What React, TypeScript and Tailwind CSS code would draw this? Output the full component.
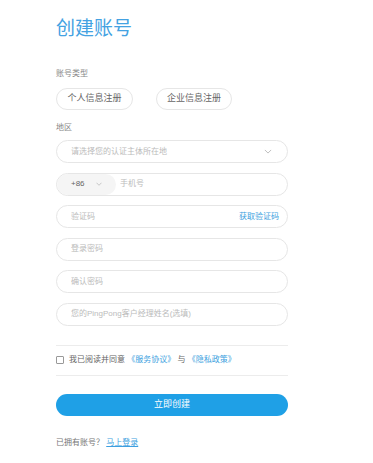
import { useState } from "react";

const font = { fontFamily: '"Liberation Sans", "Noto Sans CJK SC", sans-serif' };

function Chevron({ className }: { className?: string }) {
  return (
    <svg viewBox="0 0 12 8" className={className} fill="none" stroke="currentColor" strokeWidth="1.2">
      <path d="M1 1.5l5 5 5-5" />
    </svg>
  );
}

function Field({ placeholder, right }: { placeholder: string; right?: React.ReactNode }) {
  return (
    <div className="flex h-[23px] items-center rounded-full border border-[#e6e6e6] bg-white pl-[14px] pr-[8px]">
      <input
        className="min-w-0 flex-1 bg-transparent text-[8px] text-[#333] outline-none placeholder:text-[#bbb]"
        placeholder={placeholder}
      />
      {right}
    </div>
  );
}

export default function App() {
  const [type, setType] = useState("personal");
  const [agree, setAgree] = useState(false);

  return (
    <div className="min-h-[463px] w-[373px] bg-white" style={font}>
      <div className="ml-[56px] w-[232px] pt-[18px]">
        <h1 className="text-[19px] leading-[22px] text-[#44a2e2]">创建账号</h1>

        <p className="mt-[29px] text-[8px] leading-[10px] text-[#888]">账号类型</p>
        <div className="mt-[9px] flex gap-[23px]">
          <button
            type="button"
            onClick={() => setType("personal")}
            className="h-[22px] w-[77px] rounded-full border border-[#e6e6e6] text-[9px] text-[#666]"
          >
            个人信息注册
          </button>
          <button
            type="button"
            onClick={() => setType("company")}
            className="h-[22px] w-[76px] rounded-full border border-[#e6e6e6] text-[9px] text-[#666]"
          >
            企业信息注册
          </button>
        </div>

        <p className="mt-[13px] text-[8px] leading-[10px] text-[#888]">地区</p>
        <div className="mt-[7px] flex flex-col gap-[9.5px]">
          <div className="flex h-[23px] items-center justify-between rounded-full border border-[#e6e6e6] pl-[14px] pr-[15px]">
            <span className="text-[8px] text-[#bbb]">请选择您的认证主体所在地</span>
            <Chevron className="h-[5px] w-[8px] text-[#aaa]" />
          </div>

          <div className="flex h-[23px] items-center overflow-hidden rounded-full border border-[#e6e6e6]">
            <div className="flex h-full w-[59px] items-center gap-[11px] rounded-full bg-[#f5f5f5] pl-[14px]">
              <span className="text-[8px] text-[#666]">+86</span>
              <Chevron className="h-[4px] w-[6px] text-[#aaa]" />
            </div>
            <input
              className="ml-[4px] min-w-0 flex-1 bg-transparent text-[8px] outline-none placeholder:text-[#bbb]"
              placeholder="手机号"
            />
          </div>

          <Field
            placeholder="验证码"
            right={<span className="text-[8px] text-[#3d9fe0]">获取验证码</span>}
          />
          <Field placeholder="登录密码" />
          <Field placeholder="确认密码" />
          <Field placeholder="您的PingPong客户经理姓名(选填)" />
        </div>

        <div className="mt-[19px] border-t border-[#ececec]" />
        <label className="flex h-[29px] items-center gap-[5px] text-[8px] text-[#666]">
          <input
            type="checkbox"
            checked={agree}
            onChange={(e) => setAgree(e.target.checked)}
            className="h-[8px] w-[8px] appearance-none rounded-[1px] border border-[#999] bg-white"
          />
          <span>
            我已阅读并同意 <span className="text-[#3d9fe0]">《服务协议》</span> 与{" "}
            <span className="text-[#3d9fe0]">《隐私政策》</span>
          </span>
        </label>
        <div className="border-t border-[#ececec]" />

        <button
          type="button"
          className="mt-[18px] h-[22px] w-full rounded-full bg-[#1fa0e6] text-[9px] text-white"
        >
          立即创建
        </button>

        <p className="mt-[21px] text-[8px] text-[#777]">
          已拥有账号？ <span className="text-[#3d9fe0] underline">马上登录</span>
        </p>
      </div>
    </div>
  );
}
